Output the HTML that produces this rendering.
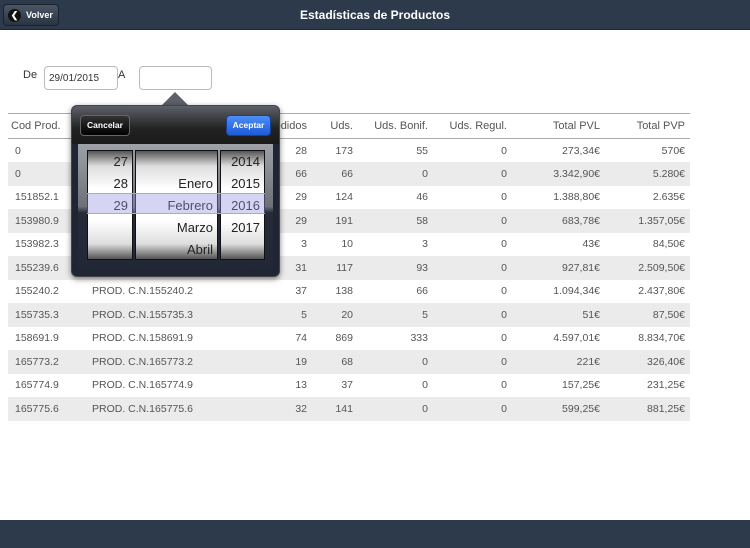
<!DOCTYPE html>
<html><head><meta charset="utf-8"><style>
*{margin:0;padding:0;box-sizing:border-box}
body{width:750px;height:548px;background:#fff;font-family:"Liberation Sans",sans-serif;position:relative;overflow:hidden;color:#444}
.hdr{position:absolute;left:0;top:0;width:750px;height:30px;background:#2c3a4c;border-bottom:1px solid #1f2936}
.hdr .t{position:absolute;left:0;width:750px;top:8px;text-align:center;color:#fff;font-weight:bold;font-size:12px}
.back{position:absolute;left:3px;top:4px;width:56px;height:22px;border-radius:4px;background:linear-gradient(#4a5667,#2a3442);border:1px solid #1a222c;color:#fff;font-size:9px;font-weight:bold}
.back i{position:absolute;left:4px;top:4px;width:13px;height:13px;border-radius:50%;background:#111;color:#fff;font-style:normal;font-size:9px;line-height:13px;text-align:center}
.back span{position:absolute;left:22px;top:5px}
.foot{position:absolute;left:0;top:520px;width:750px;height:28px;background:#2c3a4c}
.lbl{position:absolute;font-size:11px;color:#333}
.inp{position:absolute;border:1px solid #bbb;border-radius:4px;height:24px;font-size:10px;color:#333;padding:6px 4px}
table{position:absolute;left:8px;top:113px;width:682px;border-collapse:collapse;font-size:10.5px;color:#555;white-space:nowrap}
th{font-weight:normal;height:25px;border-top:1px solid #aaa;border-bottom:1px solid #aaa;text-align:right;padding-right:5px;color:#555;font-size:11px}
td{height:23.5px;text-align:right;padding-right:5px}
tr:nth-child(odd) td{background:#ebebeb}
td.l{text-align:left;padding-left:7px}
td.d{text-align:left;padding-left:4px}
th.l{text-align:left;padding-left:3px}
.pop{position:absolute;left:71px;top:105px;width:209px;height:172px;border-radius:6px;background:#1f2533;box-shadow:0 2px 6px rgba(0,0,0,.5);border:1px solid #444}
.pop .top{position:absolute;left:0;top:0;width:207px;height:38px;border-radius:5px 5px 0 0;background:linear-gradient(#5c6068,#222 60%,#1a1a1a)}
.arrow{position:absolute;left:161px;top:92px;width:0;height:0;border-left:14px solid transparent;border-right:14px solid transparent;border-bottom:14px solid #5c6068}
.btn{position:absolute;top:9px;height:21px;border-radius:4px;color:#fff;font-size:8.5px;font-weight:bold;text-align:center;line-height:19px}
.wheel{position:absolute;left:6px;top:38px;width:195px;height:125px;background:linear-gradient(#9ea2a8,#6d7078 50%,#262b38 55%,#222736)}
.drum{position:absolute;top:6px;height:110px;background:linear-gradient(#555 0%,#ddd 14%,#fff 35%,#fff 65%,#ddd 86%,#555 100%);border:1px solid #111;font-size:13px;color:#222;text-align:right;overflow:hidden}
.drum div{height:22px;line-height:22px;padding-right:4px}
.sel{position:absolute;left:15px;top:87px;width:178px;height:21px;background:rgba(150,150,225,.4);border-top:1px solid #a8a8d8;border-bottom:1px solid #a8a8d8}
</style></head><body>
<div class="hdr"><div class="back"><i>&#10094;</i><span>Volver</span></div><div class="t">Estadísticas de Productos</div></div>
<div class="lbl" style="left:23px;top:69px">De</div>
<div class="inp" style="left:44px;top:66px;width:74px">29/01/2015</div>
<div class="lbl" style="left:118px;top:69px">A</div>
<div class="inp" style="left:139px;top:66px;width:73px"></div>
<table>
<tr><th class="l" style="width:80px">Cod Prod.</th><th class="l" style="width:110px">Descripción</th><th style="width:114px">Pedidos</th><th style="width:46px">Uds.</th><th style="width:75px">Uds. Bonif.</th><th style="width:79px">Uds. Regul.</th><th style="width:93px">Total PVL</th><th>Total PVP</th></tr>
<tr><td class="l">0</td><td class="d"></td><td>28</td><td>173</td><td>55</td><td>0</td><td>273,34€</td><td>570€</td></tr>
<tr><td class="l">0</td><td class="d"></td><td>66</td><td>66</td><td>0</td><td>0</td><td>3.342,90€</td><td>5.280€</td></tr>
<tr><td class="l">151852.1</td><td class="d"></td><td>29</td><td>124</td><td>46</td><td>0</td><td>1.388,80€</td><td>2.635€</td></tr>
<tr><td class="l">153980.9</td><td class="d"></td><td>29</td><td>191</td><td>58</td><td>0</td><td>683,78€</td><td>1.357,05€</td></tr>
<tr><td class="l">153982.3</td><td class="d"></td><td>3</td><td>10</td><td>3</td><td>0</td><td>43€</td><td>84,50€</td></tr>
<tr><td class="l">155239.6</td><td class="d"></td><td>31</td><td>117</td><td>93</td><td>0</td><td>927,81€</td><td>2.509,50€</td></tr>
<tr><td class="l">155240.2</td><td class="d">PROD. C.N.155240.2</td><td>37</td><td>138</td><td>66</td><td>0</td><td>1.094,34€</td><td>2.437,80€</td></tr>
<tr><td class="l">155735.3</td><td class="d">PROD. C.N.155735.3</td><td>5</td><td>20</td><td>5</td><td>0</td><td>51€</td><td>87,50€</td></tr>
<tr><td class="l">158691.9</td><td class="d">PROD. C.N.158691.9</td><td>74</td><td>869</td><td>333</td><td>0</td><td>4.597,01€</td><td>8.834,70€</td></tr>
<tr><td class="l">165773.2</td><td class="d">PROD. C.N.165773.2</td><td>19</td><td>68</td><td>0</td><td>0</td><td>221€</td><td>326,40€</td></tr>
<tr><td class="l">165774.9</td><td class="d">PROD. C.N.165774.9</td><td>13</td><td>37</td><td>0</td><td>0</td><td>157,25€</td><td>231,25€</td></tr>
<tr><td class="l">165775.6</td><td class="d">PROD. C.N.165775.6</td><td>32</td><td>141</td><td>0</td><td>0</td><td>599,25€</td><td>881,25€</td></tr>
</table>
<div class="arrow"></div>
<div class="pop">
<div class="top"></div>
<div class="btn" style="left:8px;width:50px;background:linear-gradient(#333,#000);border:1px solid #666">Cancelar</div>
<div class="btn" style="left:154px;width:45px;background:linear-gradient(#4d8ef5,#1d5ad8);border:1px solid #1a3f99">Aceptar</div>
<div class="wheel">
<div class="drum" style="left:9px;width:46px"><div>27</div><div>28</div><div>29</div><div></div><div></div></div>
<div class="drum" style="left:57px;width:83px"><div></div><div>Enero</div><div>Febrero</div><div>Marzo</div><div>Abril</div></div>
<div class="drum" style="left:142px;width:45px"><div>2014</div><div>2015</div><div>2016</div><div>2017</div><div></div></div>
</div>
<div class="sel"></div>
</div>
<div class="foot"></div>
</body></html>
